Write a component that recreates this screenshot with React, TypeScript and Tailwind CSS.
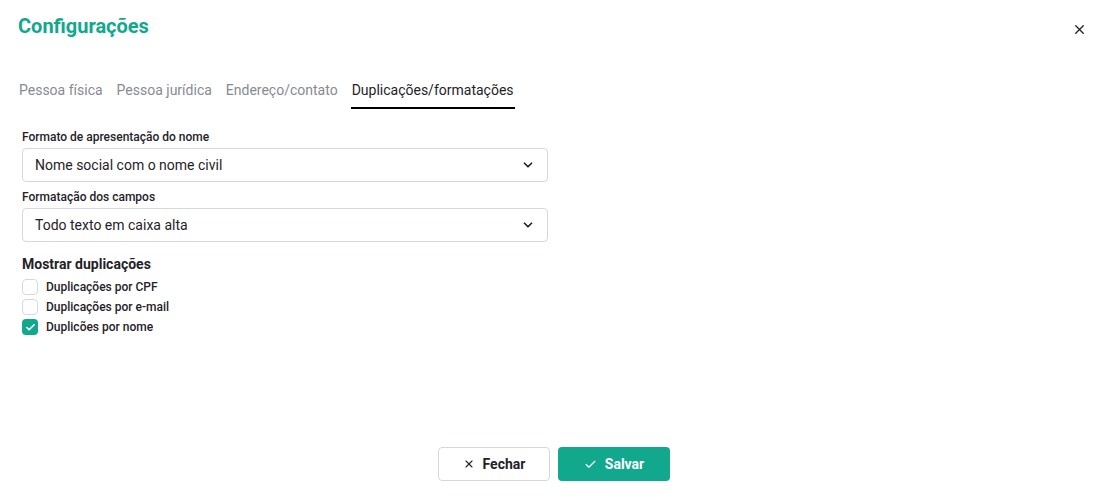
import { useState } from "react";
import { ChevronDown, X, Check } from "lucide-react";

const tabs = ["Pessoa física", "Pessoa jurídica", "Endereço/contato", "Duplicações/formatações"];

function SelectBox({ value }: { value: string }) {
  return (
    <div className="flex h-[34px] w-[526px] items-center justify-between rounded-[4px] border border-[#d3d9de] bg-white pl-3 pr-[12px]">
      <span className="text-[14px] text-[#1f2328]">{value}</span>
      <ChevronDown size={14} strokeWidth={3} className="text-[#1f2328]" />
    </div>
  );
}

function CheckRow({ label, checked, onToggle }: { label: string; checked: boolean; onToggle: () => void }) {
  return (
    <label className="flex h-5 cursor-pointer items-center gap-2" onClick={onToggle}>
      <span
        className={
          checked
            ? "flex h-4 w-4 items-center justify-center rounded-[4px] bg-[#12a88d]"
            : "flex h-4 w-4 items-center justify-center rounded-[4px] border border-[#d6dade] bg-white"
        }
      >
        {checked && <Check size={11} strokeWidth={3.5} className="text-white" />}
      </span>
      <span className="text-[12px] font-medium text-[#1f2328]">{label}</span>
    </label>
  );
}

export default function App() {
  const [active, setActive] = useState(3);
  const [checks, setChecks] = useState([false, false, true]);

  const toggle = (i: number) => setChecks((c) => c.map((v, j) => (j === i ? !v : v)));

  return (
    <div className="flex h-[500px] w-full flex-col bg-white font-['Roboto',sans-serif]">
      <div className="flex items-start justify-between pl-[18px] pr-[14px] pt-3">
        <h1 className="text-[20px] font-bold leading-7 text-[#12a88d]">Configurações</h1>
        <button className="mt-[10px] text-[#1f2328]">
          <X size={15} strokeWidth={2.2} />
        </button>
      </div>

      <div className="mt-[40px] flex gap-[14px] pl-[19px]">
        {tabs.map((t, i) => (
          <button
            key={t}
            onClick={() => setActive(i)}
            className={
              i === active
                ? "-ml-px border-b-2 border-black px-px pb-[7px] text-[14px] leading-5 text-[#1f2328]"
                : "border-b-2 border-transparent pb-[7px] text-[14px] leading-5 text-[#868b91]"
            }
          >
            {t}
          </button>
        ))}
      </div>

      <div className="mt-5 pl-[22px]">
        <p className="mb-[3px] text-[12px] font-medium leading-4 text-[#1f2328]">Formato de apresentação do nome</p>
        <SelectBox value="Nome social com o nome civil" />
        <p className="mb-[3px] mt-[7px] text-[12px] font-medium leading-4 text-[#1f2328]">Formatação dos campos</p>
        <SelectBox value="Todo texto em caixa alta" />

        <h2 className="mt-[12px] text-[14px] font-bold leading-5 text-[#1f2328]">Mostrar duplicações</h2>
        <div className="mt-[3px] flex flex-col">
          <CheckRow label="Duplicações por CPF" checked={checks[0]} onToggle={() => toggle(0)} />
          <CheckRow label="Duplicações por e-mail" checked={checks[1]} onToggle={() => toggle(1)} />
          <CheckRow label="Duplicões por nome" checked={checks[2]} onToggle={() => toggle(2)} />
        </div>
      </div>

      <div className="mt-auto flex justify-center gap-2 pb-[19px] pl-[7px]">
        <button className="flex h-[34px] w-[112px] items-center justify-center gap-2 rounded-[4px] border border-[#d3d9de] bg-white text-[14px] font-bold text-[#1f2328]">
          <X size={12} strokeWidth={2.2} /> Fechar
        </button>
        <button className="flex h-[34px] w-[112px] items-center justify-center gap-2 rounded-[4px] bg-[#12a88d] text-[14px] font-bold text-white">
          <Check size={13} strokeWidth={2.2} /> Salvar
        </button>
      </div>
    </div>
  );
}
